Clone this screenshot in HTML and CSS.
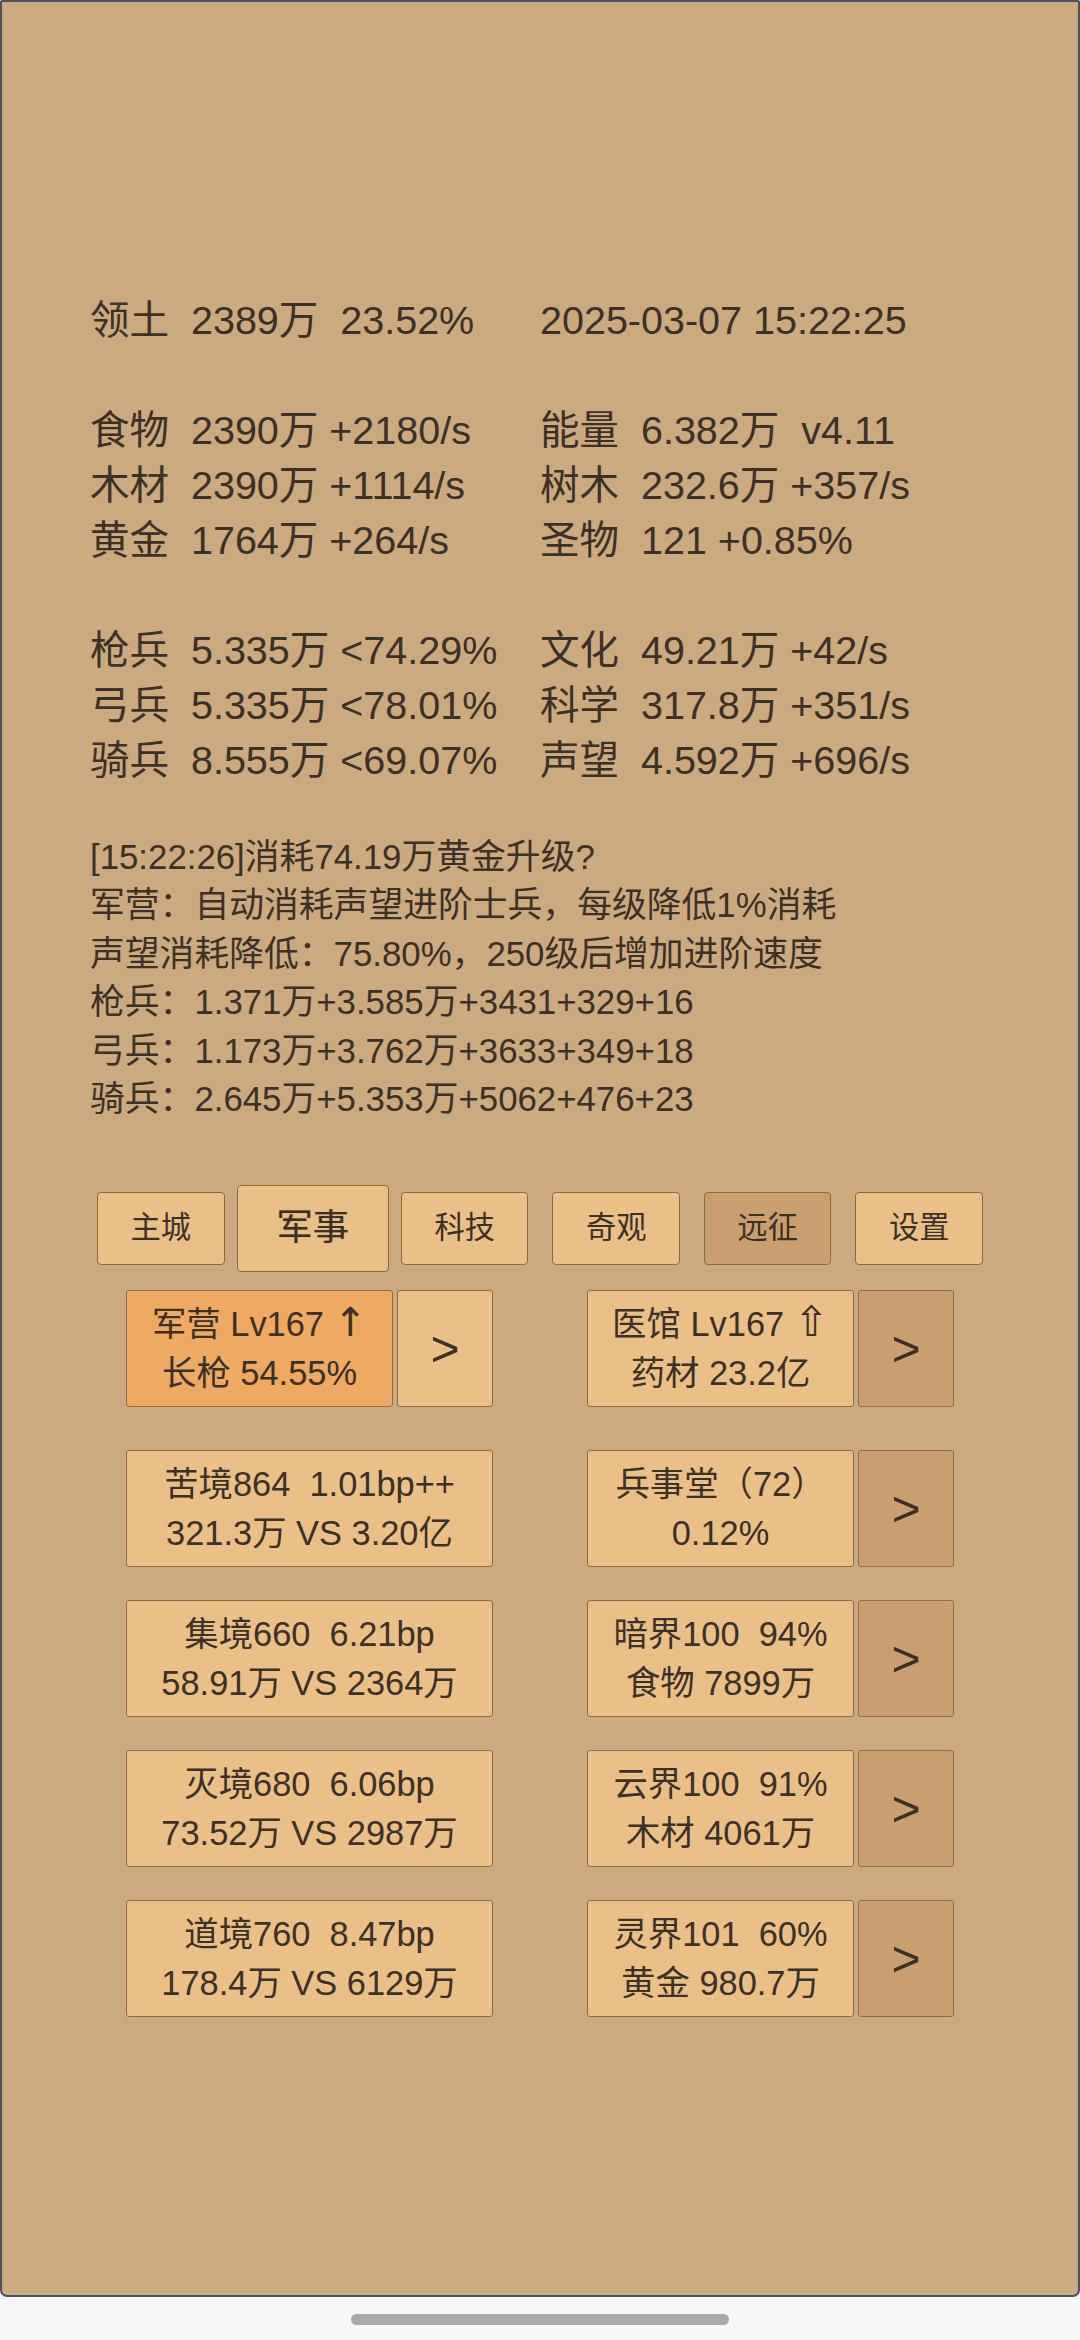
FILE: index.html
```html
<!DOCTYPE html>
<html lang="zh-CN">
<head>
<meta charset="utf-8">
<title>军事</title>
<link rel="stylesheet" href="styles.css">
</head>
<body>
<div class="screen">
  <section class="stats">
    <div class="stat-group">
      <div class="stat">领土  2389万  23.52%</div>
      <div class="stat">2025-03-07 15:22:25</div>
    </div>
    <div class="stat-group">
      <div class="stat">食物  2390万 +2180/s</div>
      <div class="stat">能量  6.382万  v4.11</div>
      <div class="stat">木材  2390万 +1114/s</div>
      <div class="stat">树木  232.6万 +357/s</div>
      <div class="stat">黄金  1764万 +264/s</div>
      <div class="stat">圣物  121 +0.85%</div>
    </div>
    <div class="stat-group">
      <div class="stat">枪兵  5.335万 &lt;74.29%</div>
      <div class="stat">文化  49.21万 +42/s</div>
      <div class="stat">弓兵  5.335万 &lt;78.01%</div>
      <div class="stat">科学  317.8万 +351/s</div>
      <div class="stat">骑兵  8.555万 &lt;69.07%</div>
      <div class="stat">声望  4.592万 +696/s</div>
    </div>
  </section>

  <section class="log">
    <div class="log-line">[15:22:26]消耗74.19万黄金升级?</div>
    <div class="log-line">军营：自动消耗声望进阶士兵，每级降低1%消耗</div>
    <div class="log-line">声望消耗降低：75.80%，250级后增加进阶速度</div>
    <div class="log-line">枪兵：1.371万+3.585万+3431+329+16</div>
    <div class="log-line">弓兵：1.173万+3.762万+3633+349+18</div>
    <div class="log-line">骑兵：2.645万+5.353万+5062+476+23</div>
  </section>

  <nav class="tabs">
    <div class="tab">主城</div>
    <div class="tab tab-active">军事</div>
    <div class="tab">科技</div>
    <div class="tab">奇观</div>
    <div class="tab tab-dim">远征</div>
    <div class="tab">设置</div>
  </nav>

  <section class="grid grid-top">
    <div class="cell">
      <div class="card card-hot">军营 Lv167 <span class="arrow">↑</span><br>长枪 54.55%</div>
      <div class="go">&gt;</div>
    </div>
    <div class="cell">
      <div class="card">医馆 Lv167 <span class="up">⇧</span><br>药材 23.2亿</div>
      <div class="go go-dim">&gt;</div>
    </div>
  </section>

  <section class="grid">
    <div class="cell">
      <div class="card">苦境864  1.01bp++<br>321.3万 VS 3.20亿</div>
    </div>
    <div class="cell">
      <div class="card">兵事堂（72）<br>0.12%</div>
      <div class="go go-dim">&gt;</div>
    </div>

    <div class="cell">
      <div class="card">集境660  6.21bp<br>58.91万 VS 2364万</div>
    </div>
    <div class="cell">
      <div class="card">暗界100  94%<br>食物 7899万</div>
      <div class="go go-dim">&gt;</div>
    </div>

    <div class="cell">
      <div class="card">灭境680  6.06bp<br>73.52万 VS 2987万</div>
    </div>
    <div class="cell">
      <div class="card">云界100  91%<br>木材 4061万</div>
      <div class="go go-dim">&gt;</div>
    </div>

    <div class="cell">
      <div class="card">道境760  8.47bp<br>178.4万 VS 6129万</div>
    </div>
    <div class="cell">
      <div class="card">灵界101  60%<br>黄金 980.7万</div>
      <div class="go go-dim">&gt;</div>
    </div>
  </section>
</div>
<div class="navbar">
  <div class="pill"></div>
</div>
</body>
</html>
```

FILE: styles.css
```css
* {
  box-sizing: border-box;
}

html, body {
  margin: 0;
  padding: 0;
}

body {
  width: 1080px;
  height: 2340px;
  background: #f6f7f9;
  font-family: "Liberation Sans", "Noto Sans CJK SC", "DejaVu Sans", sans-serif;
  color: #3a3129;
  overflow: hidden;
}

.screen {
  height: 2297px;
  background: #cbaa80;
  border: 2px solid #4c5262;
  border-radius: 2px 2px 7px 7px;
  padding-top: 291px;
}

/* ---------- stats ---------- */
.stats {
  padding-left: 88px;
  font-size: 39.5px;
  line-height: 55px;
}

.stat-group {
  display: grid;
  grid-template-columns: 450px 450px;
}

.stat-group + .stat-group {
  margin-top: 55px;
}

.stat {
  white-space: pre;
}

/* ---------- log ---------- */
.log {
  margin-top: 45px;
  padding-left: 88px;
  font-size: 34.8px;
  line-height: 48.4px;
}

.log-line {
  white-space: pre;
}

/* ---------- tabs ---------- */
.tabs {
  display: flex;
  justify-content: center;
  align-items: center;
  margin-top: 62px;
  height: 86px;
}

.tab {
  margin: 0 12px;
  font-size: 30.25px;
  line-height: 1.157;
  padding: 0.595em 1.074em;
  background: #ebc087;
  border: 1px solid #8a6943;
  border-radius: 4px;
}

.tab-active {
  margin: 0;
  font-size: 36.3px;
  padding: 0.583em 1.073em;
  text-shadow: 0 0 1px rgba(58, 49, 41, 0.45);
}

.tab-dim {
  background: #c99f6e;
}

/* ---------- building / realm grid ---------- */
.grid {
  display: grid;
  grid-template-columns: 367px 367px;
  justify-content: center;
  column-gap: 94px;
  row-gap: 33.5px;
}

.grid-top {
  margin-top: 19px;
  margin-bottom: 43.5px;
}

.cell {
  display: flex;
  gap: 4px;
}

.card {
  flex: 1;
  text-align: center;
  white-space: pre;
  font-size: 34.4px;
  line-height: 48.25px;
  padding: 9px 0;
  background: #ebc087;
  border: 1px solid #8c6b46;
  border-radius: 3px;
}

.card-hot {
  background: #eea962;
}

.arrow {
  font-family: "DejaVu Sans", sans-serif;
  font-size: 40px;
  line-height: 0;
}

.up {
  font-family: "DejaVu Sans", sans-serif;
  font-size: 42px;
  line-height: 0;
}

.go {
  width: 96px;
  display: flex;
  align-items: center;
  justify-content: center;
  font-size: 50px;
  background: #ebc087;
  border: 1px solid #8c6b46;
  border-radius: 3px;
}

.go-dim {
  background: #c99f6f;
}

/* ---------- system nav bar ---------- */
.navbar {
  display: flex;
  justify-content: center;
  padding-top: 17px;
}

.pill {
  width: 378px;
  height: 11px;
  border-radius: 6px;
  background: #a9a9ab;
}
```
